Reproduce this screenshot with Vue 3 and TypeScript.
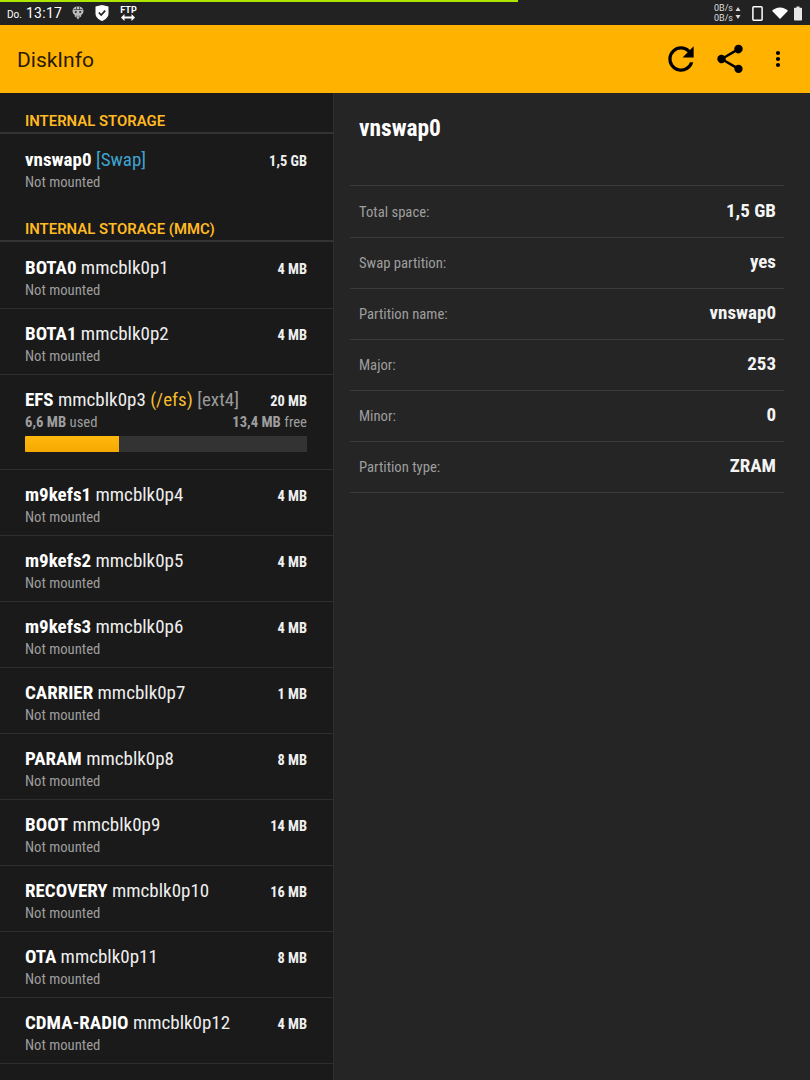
<script setup lang="ts">
interface Row { name: string; dev: string; size: string }
const rows1: Row[] = [
  { name: 'BOTA0', dev: 'mmcblk0p1', size: '4 MB' },
  { name: 'BOTA1', dev: 'mmcblk0p2', size: '4 MB' },
]
const rows2: Row[] = [
  { name: 'm9kefs1', dev: 'mmcblk0p4', size: '4 MB' },
  { name: 'm9kefs2', dev: 'mmcblk0p5', size: '4 MB' },
  { name: 'm9kefs3', dev: 'mmcblk0p6', size: '4 MB' },
  { name: 'CARRIER', dev: 'mmcblk0p7', size: '1 MB' },
  { name: 'PARAM', dev: 'mmcblk0p8', size: '8 MB' },
  { name: 'BOOT', dev: 'mmcblk0p9', size: '14 MB' },
  { name: 'RECOVERY', dev: 'mmcblk0p10', size: '16 MB' },
  { name: 'OTA', dev: 'mmcblk0p11', size: '8 MB' },
  { name: 'CDMA-RADIO', dev: 'mmcblk0p12', size: '4 MB' },
]
const details = [
  ['Total space:', '1,5 GB'],
  ['Swap partition:', 'yes'],
  ['Partition name:', 'vnswap0'],
  ['Major:', '253'],
  ['Minor:', '0'],
  ['Partition type:', 'ZRAM'],
]
</script>

<template>
  <div class="screen">
    <div class="progress"></div>
    <header class="status">
      <div class="status-left">
        <span class="day">Do.</span>
        <span class="clock">13:17</span>
        <svg class="ic-skull" viewBox="0 0 12 14" width="12" height="14"><path fill="#bdbdbd" d="M6 .5C2.500.5.5 2.300.5 5c0 2 1 3.300 2.300 4v1.500L4.500 11.500 6 13.500l1.500-2 1.700-1V9c1.300-.7 2.300-2 2.300-4C11.500 2.300 9.500.5 6 .5z"/><circle cx="3.800" cy="6" r="1.100" fill="#333"/><circle cx="8.200" cy="6" r="1.100" fill="#333"/><path stroke="#333" stroke-width=".7" d="M4.500 1v3M7.500 1v3M1.500 3.500h9M4.800 9.500v2M7.200 9.500v2"/></svg>
        <svg class="ic-shield" viewBox="0 0 14 16" width="14" height="16"><path fill="#fff" d="M0.500 1.500 7 0l6.500 1.500v7C13.500 12 10.500 14.500 7 16 3.500 14.500.5 12 .5 8.500z"/><path fill="none" stroke="#222" stroke-width="1.700" d="M3.800 7.500 6.200 10l4-4.400"/></svg>
        <div class="ftp">
          <span>FTP</span>
          <svg viewBox="0 0 14 7" width="14" height="7"><path fill="#fff" d="M0 3.500 3.500 0v2.500h7V0L14 3.500 10.500 7V4.500h-7V7z"/></svg>
        </div>
      </div>
      <div class="status-right">
        <div class="speeds"><span>0B/s</span><span>0B/s</span></div>
        <svg viewBox="0 0 6 12" width="6" height="12" class="arrows"><path fill="#ddd" d="M3 0l2.500 4h-5zM3 12 .5 8h5z"/></svg>
        <svg viewBox="0 0 10 14" width="11" height="15" class="ic-phone"><path fill="none" stroke="#fff" stroke-width="1.400" d="M1.500.8h7a.8.8 0 0 1 .8.800v10.800a.8.8 0 0 1-.8.800h-7a.8.8 0 0 1-.8-.8V1.600a.8.8 0 0 1 .8-.8z"/></svg>
        <svg viewBox="0 0 16 12" width="16" height="12" class="ic-wifi"><path fill="#fff" d="M0 3.800C2 1.800 4.800.5 8 .5s6 1.300 8 3.300L8 12z"/></svg>
        <svg viewBox="0 0 8 14" width="8" height="15" class="ic-batt"><path fill="#e8e8e8" d="M2.500 0h3v1.200H7.200a.8.8 0 0 1 .8.800v11.200a.8.8 0 0 1-.8.800H.8a.8.8 0 0 1-.8-.8V2a.8.8 0 0 1 .8-.8H2.500z"/></svg>
      </div>
    </header>

    <div class="appbar">
      <h1 class="title">DiskInfo</h1>
      <div class="actions">
        <svg viewBox="0 0 24 24" width="38" height="38"><path fill="#000" d="M17.650 6.350A7.950 7.950 0 0 0 12 4a8 8 0 1 0 7.740 10h-2.080A6 6 0 1 1 12 6c1.660 0 3.140.690 4.220 1.780L13 11h7V4z"/></svg>
        <svg viewBox="0 0 24 24" width="34" height="34" class="act-share"><path fill="#000" d="M18 16.080c-.76 0-1.440.3-1.960.77L8.910 12.700c.05-.23.090-.46.090-.7s-.04-.47-.09-.7l7.050-4.110A2.990 2.990 0 0 0 21 5a3 3 0 0 0-6 0c0 .24.040.47.090.7L8.040 9.810A2.990 2.990 0 0 0 3 12a3 3 0 0 0 5.040 2.190l7.120 4.160c-.05.210-.08.430-.08.650a2.920 2.920 0 1 0 2.920-2.920z"/></svg>
        <svg viewBox="0 0 6 18" width="6" height="18" class="act-more"><circle cx="3" cy="3" r="2.100" fill="#000"/><circle cx="3" cy="9" r="2.100" fill="#000"/><circle cx="3" cy="15" r="2.100" fill="#000"/></svg>
      </div>
    </div>

    <main class="body">
      <section class="list">
        <div class="group">INTERNAL STORAGE</div>
        <div class="row row-first">
          <div class="line">
            <span class="name"><b>vnswap0</b> <span class="swap">[Swap]</span></span>
            <b class="size">1,5 GB</b>
          </div>
          <div class="sub">Not mounted</div>
        </div>
        <div class="group group-second">INTERNAL STORAGE (MMC)</div>
        <div v-for="r in rows1" :key="r.dev" class="row ruled">
          <div class="line">
            <span class="name"><b>{{ r.name }}</b> {{ r.dev }}</span>
            <b class="size">{{ r.size }}</b>
          </div>
          <div class="sub">Not mounted</div>
        </div>
        <div class="row ruled row-efs">
          <div class="line">
            <span class="name"><b>EFS</b> mmcblk0p3 <span class="mount">(/efs)</span> <span class="fs">[ext4]</span></span>
            <b class="size">20 MB</b>
          </div>
          <div class="usage">
            <span><b>6,6 MB</b> used</span>
            <span><b>13,4 MB</b> free</span>
          </div>
          <div class="bar"><div class="fill" :style="{ width: '33.300%' }"></div></div>
        </div>
        <div v-for="r in rows2" :key="r.dev" class="row ruled">
          <div class="line">
            <span class="name"><b>{{ r.name }}</b> {{ r.dev }}</span>
            <b class="size">{{ r.size }}</b>
          </div>
          <div class="sub">Not mounted</div>
        </div>
      </section>
      <section class="detail">
        <h2 class="detail-title">vnswap0</h2>
        <div class="table">
          <div v-for="d in details" :key="d[0]" class="drow">
            <span class="dlabel">{{ d[0] }}</span>
            <b class="dvalue">{{ d[1] }}</b>
          </div>
        </div>
      </section>
    </main>
  </div>
</template>

<style>
html, body { margin: 0; padding: 0; background: #252525; }
</style>

<style scoped>
.screen {
  position: relative;
  width: 810px;
  height: 1080px;
  overflow: hidden;
  background: #252525;
  font-family: Roboto, "Liberation Sans", sans-serif;
  font-stretch: 75%;
  display: flex;
  flex-direction: column;
}
.progress {
  position: absolute;
  left: 0;
  top: 0;
  width: 518px;
  height: 2px;
  background: #aee600;
}
.status {
  height: 25px;
  flex: none;
  background: #222;
  color: #fff;
  display: flex;
  justify-content: space-between;
  align-items: center;
  padding: 1px 8px 0 7px;
  box-sizing: border-box;
  font-stretch: 100%;
}
.status-left, .status-right { display: flex; align-items: center; }
.day { font-size: 10px; margin-right: 4px; margin-top: 2px; }
.clock { font-size: 14px; letter-spacing: .3px; }
.ic-skull { margin-left: 10px; }
.ic-shield { margin-left: 11px; }
.ftp { margin-left: 11px; display: flex; flex-direction: column; align-items: center; font-size: 9px; line-height: 8px; font-weight: 700; }
.speeds { display: flex; flex-direction: column; font-size: 9px; line-height: 10px; color: #ddd; text-align: right; margin-right: 2px; }
.arrows { margin-right: 11px; }
.ic-wifi { margin-left: 9px; }
.ic-batt { margin-left: 6px; }
.appbar {
  height: 68px;
  flex: none;
  background: #ffb300;
  display: flex;
  align-items: center;
  justify-content: space-between;
  box-sizing: border-box;
  padding: 0 29px 0 17px;
}
.title {
  margin: 2px 0 0;
  font-size: 21px;
  font-weight: 400;
  font-stretch: 100%;
  color: #2a1a00;
}
.actions { display: flex; align-items: center; }
.act-share { margin-left: 13px; }
.act-more { margin-left: 28px; }
.body { flex: 1; display: flex; min-height: 0; }
.list {
  width: 334px;
  flex: none;
  box-sizing: border-box;
  background: #1a1a1a;
  border-right: 1px solid #2e2e2e;
}
.group {
  height: 41px;
  box-sizing: border-box;
  padding: 19px 25px 0;
  border-bottom: 2px solid #333;
  color: #ffb922;
  font-size: 14.900px;
  line-height: 18px;
  font-weight: 600;
  font-stretch: 100%;
}
.group-second { margin-bottom: 1px; }
.row { box-sizing: border-box; padding: 12px 26px 0 25px; height: 66px; }
.row-first { height: 67px; padding-top: 13px; }
.ruled { border-bottom: 1px solid #2e2e2e; }
.row-efs { height: 95px; }
.line { display: flex; justify-content: space-between; align-items: center; height: 24px; }
.name { font-size: 19px; color: #eee; white-space: nowrap; }
.name b { color: #fff; font-weight: 700; }
.swap { color: #3fa3d0; }
.mount { color: #f5bd2c; }
.fs { color: #9a9a9a; }
.size { font-size: 14.400px; color: #f0f0f0; font-weight: 700; margin-top: 5px; }
.sub { font-size: 14.700px; line-height: 20px; color: #9e9e9e; margin-top: 1px; }
.usage { display: flex; justify-content: space-between; font-size: 14.700px; line-height: 20px; color: #9e9e9e; margin-top: 1px; }
.usage b { font-weight: 700; }
.bar { height: 16px; margin-top: 4px; background: #333; border-radius: 1px; overflow: hidden; }
.fill { height: 100%; background: linear-gradient(#ffb90e, #f5a800); }
.detail { flex: 1; min-width: 0; padding: 0 26px 0 16px; }
.detail-title {
  margin: 0;
  padding: 20px 0 0 9px;
  height: 92px;
  box-sizing: border-box;
  font-size: 23.400px;
  line-height: 30px;
  font-weight: 700;
  color: #fff;
}
.table { border-top: 1px solid #3a3a3a; padding-top: 1px; }
.drow {
  height: 51px;
  box-sizing: border-box;
  border-bottom: 1px solid #3a3a3a;
  display: flex;
  align-items: center;
  justify-content: space-between;
  padding: 0 8px 0 9px;
}
.dlabel { font-size: 14.700px; color: #9e9e9e; }
.dvalue { font-size: 19px; color: #f4f4f4; font-weight: 700; margin-bottom: 3px; }
</style>
